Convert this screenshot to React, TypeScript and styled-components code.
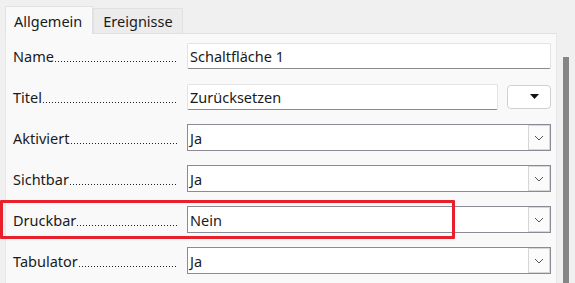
import styled, { createGlobalStyle } from 'styled-components'

const Global = createGlobalStyle`
  body {
    margin: 0;
    background: #f0f0f0;
    font-family: 'Noto Sans', 'Open Sans', sans-serif;
    font-size: 14.5px;
    color: #1a1a1a;
  }
`

const Window = styled.div`
  width: 575px;
  height: 283px;
  overflow: hidden;
  display: flex;
  flex-direction: column;
`

const TabStrip = styled.div`
  display: flex;
  align-items: flex-end;
  padding: 6px 0 0 5px;
  height: 27px;
`

const Tab = styled.div<{ $active?: boolean }>`
  box-sizing: border-box;
  height: ${({ $active }) => ($active ? '28px' : '25px')};
  padding: ${({ $active }) => ($active ? '0 10px 0 8px' : '0 9px 0 9px')};
  display: flex;
  align-items: center;
  background: ${({ $active }) => ($active ? '#f9f9f9' : '#ececec')};
  border: 1px solid #e1e1e1;
  border-bottom: none;
  margin-bottom: ${({ $active }) => ($active ? '-1px' : '0')};
  position: relative;
  z-index: ${({ $active }) => ($active ? 1 : 0)};
`

const Body = styled.div`
  flex: 1;
  display: flex;
`

const Panel = styled.div`
  position: relative;
  box-sizing: border-box;
  width: 552px;
  margin-left: 5px;
  background: #f9f9f9;
  border-top: 1px solid #e1e1e1;
  border-left: 1px solid #e8e8e8;
  border-right: 1px solid #e8e8e8;
  padding-top: 1px;
`

const Scrollbar = styled.div`
  flex: 1;
  display: flex;
  justify-content: center;
  padding-top: 24px;
`

const Thumb = styled.div`
  width: 6px;
  background: #868686;
`

const Row = styled.div<{ $highlight?: boolean }>`
  position: relative;
  height: 41px;
  display: flex;
  align-items: center;
  padding-left: 7px;

  ${({ $highlight }) =>
    $highlight &&
    `
    &::after {
      content: '';
      position: absolute;
      left: -6px;
      top: 1px;
      width: 449px;
      height: 33px;
      border: 3px solid #e8202b;
      border-radius: 1px;
      pointer-events: none;
    }
  `}
`

const Label = styled.div`
  width: 165px;
  margin-right: 9px;
  display: flex;
  align-items: baseline;
  white-space: nowrap;
`

/* dotted leader drawn as a repeating background, sitting on the baseline */
const Leader = styled.span`
  flex: 1;
  height: 4px;
  margin-left: 1px;
  background: linear-gradient(to right, #222 1px, transparent 1px) repeat-x
    left bottom / 3px 1px;
`

const TextInput = styled.div<{ $width: number }>`
  box-sizing: border-box;
  width: ${({ $width }) => $width}px;
  height: 26px;
  background: #fff;
  border: 1px solid #e3e3e3;
  border-bottom: 1px solid #8a8a8a;
  border-radius: 2px;
  padding-left: 2px;
  display: flex;
  align-items: center;
`

const MenuButton = styled.div`
  box-sizing: border-box;
  width: 44px;
  height: 24px;
  margin-left: 9px;
  background: #fff;
  border: 1px solid #d0d0d0;
  border-radius: 4px;
  display: flex;
  align-items: center;
  justify-content: flex-end;
  padding-right: 11px;
`

const Combo = styled.div`
  box-sizing: border-box;
  width: 364px;
  height: 27px;
  background: #fff;
  border: 1px solid #8b8b96;
  display: flex;
  align-items: stretch;
`

const ComboValue = styled.div`
  flex: 1;
  padding-left: 2px;
  display: flex;
  align-items: center;
`

const ComboButton = styled.div`
  width: 20px;
  border: 1px solid #d6d6d6;
  background: #fbfbfb;
  display: flex;
  align-items: center;
  justify-content: center;
`

function FieldLabel({ text }: { text: string }) {
  return (
    <Label>
      <span>{text}</span>
      <Leader />
    </Label>
  )
}

function Chevron() {
  return (
    <svg width="10" height="6" viewBox="0 0 10 6">
      <path d="M1 1 L5 5 L9 1" fill="none" stroke="#555" strokeWidth="1" />
    </svg>
  )
}

const combos = [
  { label: 'Aktiviert', value: 'Ja' },
  { label: 'Sichtbar', value: 'Ja' },
  { label: 'Druckbar', value: 'Nein', highlight: true },
  { label: 'Tabulator', value: 'Ja' },
]

export default function App() {
  return (
    <Window>
      <Global />
      <TabStrip>
        <Tab $active>Allgemein</Tab>
        <Tab>Ereignisse</Tab>
      </TabStrip>
      <Body>
        <Panel>
          <Row>
            <FieldLabel text="Name" />
            <TextInput $width={364}>Schaltfläche 1</TextInput>
          </Row>
          <Row>
            <FieldLabel text="Titel" />
            <TextInput $width={311}>Zurücksetzen</TextInput>
            <MenuButton>
              <svg width="9" height="5" viewBox="0 0 9 5">
                <path d="M0 0 H9 L4.5 5 Z" fill="#111" />
              </svg>
            </MenuButton>
          </Row>
          {combos.map((c) => (
            <Row key={c.label} $highlight={c.highlight}>
              <FieldLabel text={c.label} />
              <Combo>
                <ComboValue>{c.value}</ComboValue>
                <ComboButton>
                  <Chevron />
                </ComboButton>
              </Combo>
            </Row>
          ))}
        </Panel>
        <Scrollbar>
          <Thumb />
        </Scrollbar>
      </Body>
    </Window>
  )
}
